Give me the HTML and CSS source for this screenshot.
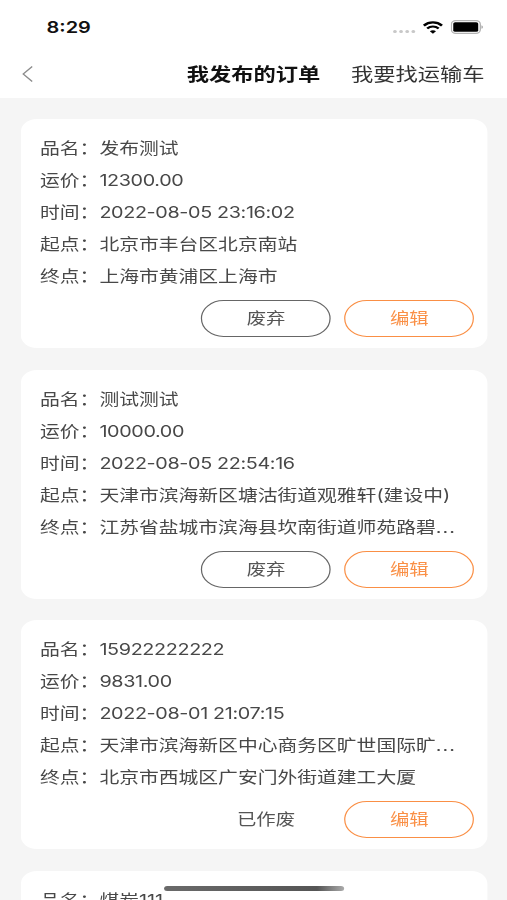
FILE: index.html
```
<!DOCTYPE html>
<html lang="zh-CN">
<head>
<meta charset="UTF-8">
<title>我发布的订单</title>
<meta name="viewport" content="width=device-width, initial-scale=1.0">
<link rel="stylesheet" href="styles.css">
</head>
<body>

<div class="screen">
  <div class="status-bar">
    <span class="time">8:29</span>
    <div class="status-icons">
      <div class="dots"><i></i><i></i><i></i><i></i></div>
      <svg class="wifi" viewBox="0 0 17 13" width="17" height="13">
        <path d="M1.1 4.6C5.3.4 11.7.4 15.9 4.6" fill="none" stroke="#000" stroke-width="2.2"/>
        <path d="M3.8 7.5C6.5 4.9 10.5 4.9 13.2 7.5" fill="none" stroke="#000" stroke-width="2.1"/>
        <path d="M8.5 12.8L6 10.2C7.4 8.9 9.6 8.9 11 10.2Z"/>
      </svg>
      <svg class="battery" viewBox="0 0 27 14" width="27" height="14">
        <rect x=".6" y=".6" width="23.6" height="12.8" rx="3.6" fill="#fff" stroke="#b3b3b3" stroke-width="1.1"/>
        <rect x="2.1" y="2.2" width="20.4" height="9.6" rx="1.6"/>
        <path d="M25.2 5.2C26.6 5.7 26.6 8.3 25.2 8.8Z" fill="#999"/>
      </svg>
    </div>
  </div>

  <div class="nav-bar">
    <svg class="back" viewBox="0 0 9 16" width="9" height="16">
      <path d="M8.3.5L.9 8l7.4 7.5" fill="none" stroke="#8c8c8c" stroke-width="1.1"/>
    </svg>
    <div class="nav-title">我发布的订单</div>
    <div class="nav-link">我要找运输车</div>
  </div>

  <div class="order-list">
    <div class="order">
      <div class="row"><span class="label">品名：</span><span class="value">发布测试</span></div>
      <div class="row"><span class="label">运价：</span><span class="value num">12300.00</span></div>
      <div class="row"><span class="label">时间：</span><span class="value num">2022-08-05 23:16:02</span></div>
      <div class="row"><span class="label">起点：</span><span class="value">北京市丰台区北京南站</span></div>
      <div class="row"><span class="label">终点：</span><span class="value">上海市黄浦区上海市</span></div>
      <div class="actions">
        <div class="btn">废弃</div>
        <div class="btn btn-edit">编辑</div>
      </div>
    </div>

    <div class="order">
      <div class="row"><span class="label">品名：</span><span class="value">测试测试</span></div>
      <div class="row"><span class="label">运价：</span><span class="value num">10000.00</span></div>
      <div class="row"><span class="label">时间：</span><span class="value num">2022-08-05 22:54:16</span></div>
      <div class="row"><span class="label">起点：</span><span class="value">天津市滨海新区塘沽街道观雅轩(建设中)</span></div>
      <div class="row"><span class="label">终点：</span><span class="value">江苏省盐城市滨海县坎南街道师苑路碧<span class="more">...</span></span></div>
      <div class="actions">
        <div class="btn">废弃</div>
        <div class="btn btn-edit">编辑</div>
      </div>
    </div>

    <div class="order">
      <div class="row"><span class="label">品名：</span><span class="value num">15922222222</span></div>
      <div class="row"><span class="label">运价：</span><span class="value num">9831.00</span></div>
      <div class="row"><span class="label">时间：</span><span class="value num">2022-08-01 21:07:15</span></div>
      <div class="row"><span class="label">起点：</span><span class="value">天津市滨海新区中心商务区旷世国际旷<span class="more">...</span></span></div>
      <div class="row"><span class="label">终点：</span><span class="value">北京市西城区广安门外街道建工大厦</span></div>
      <div class="actions">
        <div class="btn btn-text">已作废</div>
        <div class="btn btn-edit">编辑</div>
      </div>
    </div>

    <div class="order">
      <div class="row"><span class="label">品名：</span><span class="value">煤炭111</span></div>
    </div>
  </div>

  <div class="home-bar"></div>
</div>

</body>
</html>
```
FILE: styles.css
```
body {
  margin: 0;
  overflow: hidden;
  background-color: #f5f5f5;
}
.screen {
  position: relative;
  width: 414px;
  height: 900px;
  overflow: hidden;
  transform: scaleX(1.22464);
  transform-origin: 0 0;
  font-family: Inter, "Noto Sans CJK SC", sans-serif;
  font-size: 16.17px;
  color: #484848;
}
.status-bar {
  display: flex;
  justify-content: space-between;
  align-items: center;
  height: 54px;
  padding: 0 19px 0 38px;
  box-sizing: border-box;
  background-color: #fff;
}
.time {
  font-size: 16.3px;
  font-weight: 600;
  color: #111;
}
.status-icons {
  display: flex;
  align-items: center;
}
.dots {
  display: flex;
  gap: 1.9px;
  margin: 9px 6px 0 0;
}
.dots i {
  width: 3.2px;
  height: 3.6px;
  border-radius: 50%;
  background-color: #c8c8c8;
}
.battery {
  margin-left: 6px;
}
.nav-bar {
  display: flex;
  align-items: center;
  height: 44px;
  padding: 0 18.3px 4px 17.5px;
  box-sizing: border-box;
  background-color: #fff;
  font-size: 18.2px;
  line-height: 40px;
}
.nav-title {
  margin-left: auto;
  font-weight: 700;
  color: #111;
}
.nav-link {
  margin-left: 25px;
  color: #333;
}
.order-list {
  display: flex;
  flex-direction: column;
  gap: 21.5px;
  padding: 21px 16px 0 16.5px;
}
.order {
  padding: 13px 10.8px 11px 16.2px;
  border-radius: 13px;
  background-color: #fff;
}
.row {
  display: flex;
  height: 32px;
  line-height: 32px;
  white-space: nowrap;
}
.num {
  letter-spacing: -0.3px;
}
.more {
  letter-spacing: 0.9px;
}
.actions {
  display: flex;
  justify-content: flex-end;
  gap: 11px;
  margin-top: 8px;
}
.btn {
  width: 106px;
  height: 37px;
  box-sizing: border-box;
  border: 1px solid #666;
  border-radius: 19px;
  line-height: 35px;
  text-align: center;
  font-size: 15.8px;
  color: #555;
}
.btn-edit {
  border-color: #fa8f45;
  color: #fa8f45;
}
.btn-text {
  border-color: transparent;
}
.home-bar {
  position: absolute;
  left: 134px;
  bottom: 9px;
  width: 147px;
  height: 5px;
  border-radius: 3px;
  background: linear-gradient(90deg, #6a6a6a, #555 85%, #aaa);
}
```
